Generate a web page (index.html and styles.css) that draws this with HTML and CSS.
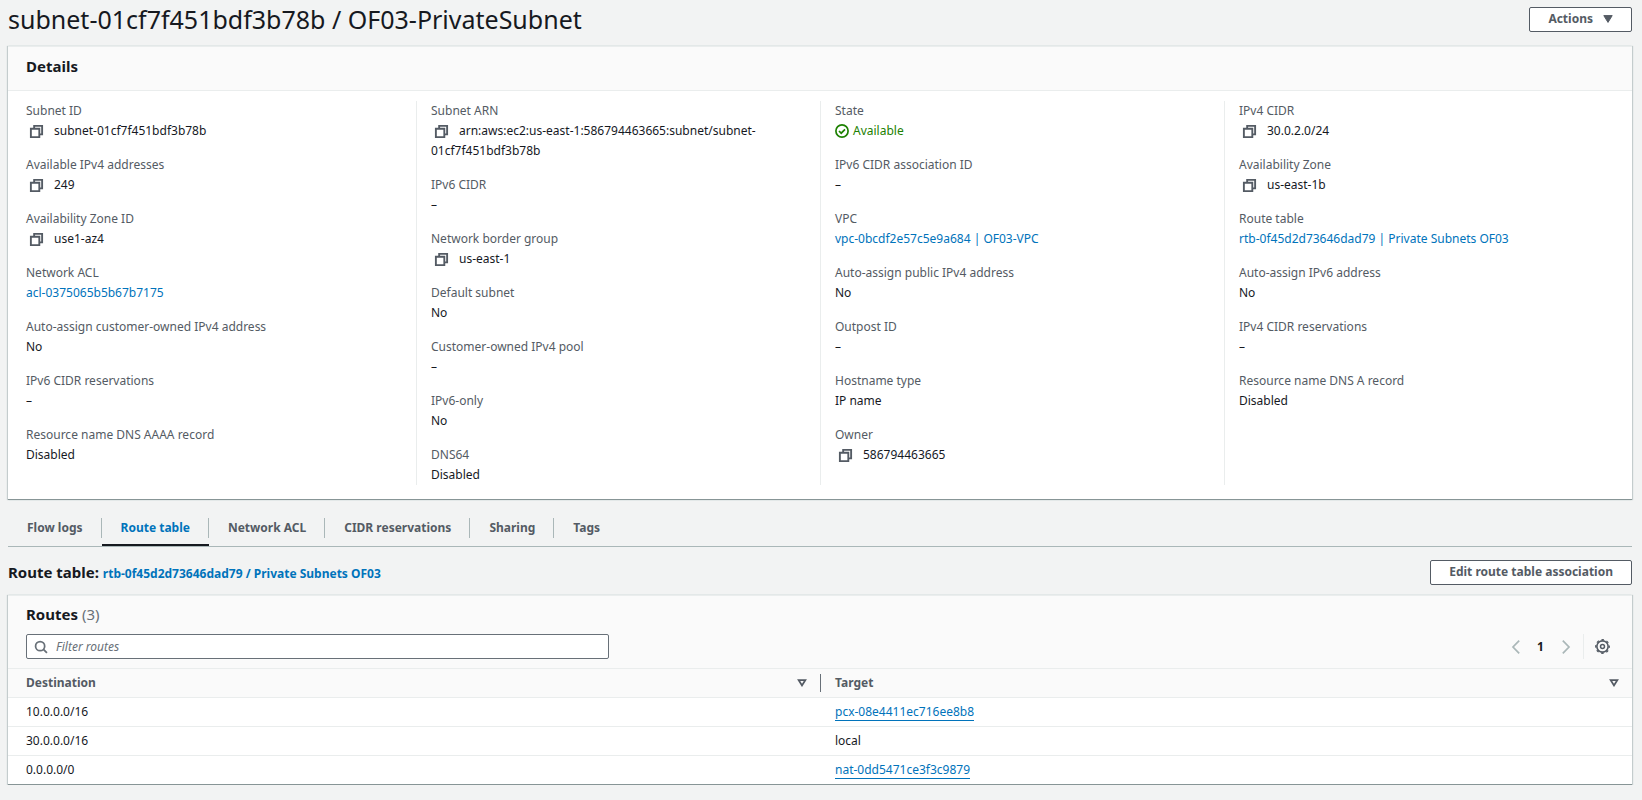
FILE: index.html
```html
<!DOCTYPE html>
<html lang="en">
<head>
<meta charset="utf-8">
<meta name="viewport" content="width=device-width, initial-scale=1">
<title>subnet-01cf7f451bdf3b78b / OF03-PrivateSubnet</title>
<link rel="stylesheet" href="styles.css">
</head>
<body>
<svg class="sprite" aria-hidden="true">
  <symbol id="copy" viewBox="0 0 16 16"><path d="M2 5h9v9H2z M5.5 5V2H14v9h-3" fill="none" stroke="currentColor" stroke-width="2"/></symbol>
  <symbol id="sort" viewBox="0 0 10 8"><path d="M1.7 1.2h6.6L5 6.4z" fill="none" stroke="currentColor" stroke-width="1.8"/></symbol>
</svg>
<main class="page">
  <header class="page-header">
    <h1 class="page-title">subnet-01cf7f451bdf3b78b / OF03-PrivateSubnet</h1>
    <button class="button" type="button">Actions
      <svg class="caret" viewBox="0 0 10 8" aria-hidden="true"><path d="M.8.6h8.4L5 7.4z" fill="currentColor" stroke="currentColor" stroke-linejoin="round"/></svg>
    </button>
  </header>

  <section class="panel">
    <div class="panel-header"><h2 class="panel-title">Details</h2></div>
    <div class="details">
      <dl class="column">
        <div class="field"><dt>Subnet ID</dt><dd><button class="copy" type="button" aria-label="Copy subnet ID"><svg><use href="#copy"/></svg></button>subnet-01cf7f451bdf3b78b</dd></div>
        <div class="field"><dt>Available IPv4 addresses</dt><dd><button class="copy" type="button" aria-label="Copy available addresses"><svg><use href="#copy"/></svg></button>249</dd></div>
        <div class="field"><dt>Availability Zone ID</dt><dd><button class="copy" type="button" aria-label="Copy zone ID"><svg><use href="#copy"/></svg></button>use1-az4</dd></div>
        <div class="field"><dt>Network ACL</dt><dd><a href="#">acl-0375065b5b67b7175</a></dd></div>
        <div class="field"><dt>Auto-assign customer-owned IPv4 address</dt><dd>No</dd></div>
        <div class="field"><dt>IPv6 CIDR reservations</dt><dd>–</dd></div>
        <div class="field"><dt>Resource name DNS AAAA record</dt><dd>Disabled</dd></div>
      </dl>
      <dl class="column">
        <div class="field"><dt>Subnet ARN</dt><dd><button class="copy" type="button" aria-label="Copy subnet ARN"><svg><use href="#copy"/></svg></button>arn:aws:ec2:us-east-1:586794463665:subnet/subnet-<wbr>01cf7f451bdf3b78b</dd></div>
        <div class="field"><dt>IPv6 CIDR</dt><dd>–</dd></div>
        <div class="field"><dt>Network border group</dt><dd><button class="copy" type="button" aria-label="Copy border group"><svg><use href="#copy"/></svg></button>us-east-1</dd></div>
        <div class="field"><dt>Default subnet</dt><dd>No</dd></div>
        <div class="field"><dt>Customer-owned IPv4 pool</dt><dd>–</dd></div>
        <div class="field"><dt>IPv6-only</dt><dd>No</dd></div>
        <div class="field"><dt>DNS64</dt><dd>Disabled</dd></div>
      </dl>
      <dl class="column">
        <div class="field"><dt>State</dt><dd class="status"><svg class="status-icon" viewBox="0 0 14 14" aria-hidden="true"><g fill="none" stroke="currentColor" stroke-width="1.7"><circle cx="7" cy="7" r="6.1"/><path d="M4 7l2.2 2.2L10 5.4"/></g></svg>Available</dd></div>
        <div class="field"><dt>IPv6 CIDR association ID</dt><dd>–</dd></div>
        <div class="field"><dt>VPC</dt><dd><a href="#">vpc-0bcdf2e57c5e9a684 | OF03-VPC</a></dd></div>
        <div class="field"><dt>Auto-assign public IPv4 address</dt><dd>No</dd></div>
        <div class="field"><dt>Outpost ID</dt><dd>–</dd></div>
        <div class="field"><dt>Hostname type</dt><dd>IP name</dd></div>
        <div class="field"><dt>Owner</dt><dd><button class="copy" type="button" aria-label="Copy owner"><svg><use href="#copy"/></svg></button>586794463665</dd></div>
      </dl>
      <dl class="column">
        <div class="field"><dt>IPv4 CIDR</dt><dd><button class="copy" type="button" aria-label="Copy IPv4 CIDR"><svg><use href="#copy"/></svg></button>30.0.2.0/24</dd></div>
        <div class="field"><dt>Availability Zone</dt><dd><button class="copy" type="button" aria-label="Copy zone"><svg><use href="#copy"/></svg></button>us-east-1b</dd></div>
        <div class="field"><dt>Route table</dt><dd><a href="#">rtb-0f45d2d73646dad79 | Private Subnets OF03</a></dd></div>
        <div class="field"><dt>Auto-assign IPv6 address</dt><dd>No</dd></div>
        <div class="field"><dt>IPv4 CIDR reservations</dt><dd>–</dd></div>
        <div class="field"><dt>Resource name DNS A record</dt><dd>Disabled</dd></div>
      </dl>
    </div>
  </section>

  <nav class="tabs" role="tablist">
    <button class="tab" type="button" role="tab" aria-selected="false">Flow logs</button>
    <button class="tab" type="button" role="tab" aria-selected="true">Route table</button>
    <button class="tab" type="button" role="tab" aria-selected="false">Network ACL</button>
    <button class="tab" type="button" role="tab" aria-selected="false">CIDR reservations</button>
    <button class="tab" type="button" role="tab" aria-selected="false">Sharing</button>
    <button class="tab" type="button" role="tab" aria-selected="false">Tags</button>
  </nav>

  <div class="association">
    <h2 class="association-title">Route table: <a href="#">rtb-0f45d2d73646dad79 / Private Subnets OF03</a></h2>
    <button class="button" type="button">Edit route table association</button>
  </div>

  <section class="panel">
    <div class="routes-header">
      <h2 class="panel-title">Routes <span class="count">(3)</span></h2>
      <div class="toolbar">
        <div class="search">
          <svg class="search-icon" viewBox="0 0 16 16" aria-hidden="true"><g fill="none" stroke="currentColor" stroke-width="2"><circle cx="7" cy="7" r="5.2"/><path d="M10.8 10.8l4 4"/></g></svg>
          <input class="search-input" type="search" placeholder="Filter routes" aria-label="Filter routes">
        </div>
        <div class="pager">
          <button class="pager-button" type="button" aria-label="Previous page"><svg viewBox="0 0 14 14"><path d="M10.2.7L4 7l6.2 6.3" fill="none" stroke="currentColor" stroke-width="1.7"/></svg></button>
          <button class="pager-button current" type="button">1</button>
          <button class="pager-button" type="button" aria-label="Next page"><svg viewBox="0 0 14 14"><path d="M3.8.7L10 7l-6.2 6.3" fill="none" stroke="currentColor" stroke-width="1.7"/></svg></button>
          <button class="settings" type="button" aria-label="Preferences"><svg viewBox="0 0 16 16"><g fill="none" stroke="currentColor"><circle cx="8" cy="8" r="6" stroke-width="1.7"/><circle cx="8" cy="8" r="7.2" stroke-width="1.4" stroke-dasharray="2.8 2.855" stroke-dashoffset="1.4"/><circle cx="8" cy="8" r="2.1" stroke-width="1.6"/></g></svg></button>
        </div>
      </div>
    </div>
    <table class="routes">
      <thead>
        <tr>
          <th scope="col"><div class="head-cell">Destination<svg class="sort"><use href="#sort"/></svg></div></th>
          <th scope="col"><div class="head-cell">Target<svg class="sort"><use href="#sort"/></svg></div></th>
        </tr>
      </thead>
      <tbody>
        <tr><td>10.0.0.0/16</td><td><a href="#">pcx-08e4411ec716ee8b8</a></td></tr>
        <tr><td>30.0.0.0/16</td><td>local</td></tr>
        <tr><td>0.0.0.0/0</td><td><a href="#">nat-0dd5471ce3f3c9879</a></td></tr>
      </tbody>
    </table>
  </section>
</main>
</body>
</html>
```
FILE: styles.css
```css
* {
  box-sizing: border-box;
}

body {
  margin: 0;
  background: #f2f3f3;
  color: #16191f;
  font-family: "Noto Sans", "Open Sans", sans-serif;
  font-size: 12px;
  line-height: 20px;
}

h1, h2, dl, dd {
  margin: 0;
}

button, input {
  font: inherit;
  color: inherit;
}

button {
  padding: 0;
  border: 0;
  background: none;
  cursor: pointer;
}

a {
  color: #0073bb;
  text-decoration: none;
}

.sprite {
  display: none;
}

.page {
  padding: 0 10px 0 8px;
}

.page-header {
  display: flex;
  align-items: center;
  justify-content: space-between;
  height: 38px;
  margin-bottom: 8px;
}

.page-title {
  font-size: 25px;
  font-weight: 400;
  line-height: 32px;
}

.button {
  display: flex;
  align-items: center;
  gap: 10px;
  padding: 2px 18px 3px;
  border: 1px solid #545b64;
  border-radius: 2px;
  background: #fff;
  color: #545b64;
  font-weight: 700;
  line-height: 18px;
}

.caret {
  width: 10px;
  height: 8px;
}

.panel {
  background: #fff;
  border-top: 1px solid #eaeded;
  border-bottom: 1px solid #879596;
  box-shadow: 1px 0 1px 0 #c4cccd, -1px 0 1px 0 #c4cccd;
}

.panel-header {
  padding: 7px 18px 12px;
  border-bottom: 1px solid #eaeded;
  background: #fafafa;
}

.panel-title {
  font-size: 15px;
  font-weight: 700;
  line-height: 24px;
}

.details {
  display: grid;
  grid-template-columns: repeat(4, 1fr);
  padding: 10px 4px 14px;
}

.column {
  display: flex;
  flex-direction: column;
  gap: 14px;
  padding: 0 14px;
}

.column + .column {
  border-left: 1px solid #eaeded;
}

.field dt {
  color: #545b64;
}

.copy {
  margin: 0 10px 0 3px;
  vertical-align: middle;
}

.copy svg {
  display: block;
  width: 15px;
  height: 15px;
  color: #545b64;
}

.status {
  display: flex;
  align-items: center;
  gap: 4px;
  color: #1d8102;
}

.status-icon {
  width: 14px;
  height: 14px;
}

.tabs {
  display: flex;
  margin-top: 18px;
  border-bottom: 1px solid #aab7b8;
}

.tab {
  display: flex;
  padding-bottom: 6px;
  border-bottom: 2px solid transparent;
  color: #545b64;
  font-weight: 700;
}

.tab::before {
  content: "";
  width: 1px;
  height: 20px;
  margin-right: 18px;
}

.tab::after {
  content: "";
  width: 1px;
  height: 20px;
  margin-left: 18px;
  background: #aab7b8;
}

.tab:last-child::after {
  background: none;
}

.tab[aria-selected="true"] {
  border-bottom-color: #16191f;
  color: #0073bb;
}

.association {
  display: flex;
  align-items: center;
  justify-content: space-between;
  margin: 13px 0 10px;
}

.association-title {
  font-size: 15px;
  font-weight: 700;
}

.association-title a {
  font-size: 12px;
}

.routes-header {
  padding: 6px 18px 9px;
  background: #fafafa;
}

.count {
  color: #687078;
  font-weight: 400;
}

.toolbar {
  display: flex;
  align-items: center;
  justify-content: space-between;
  margin-top: 8px;
}

.search {
  display: flex;
  flex: 0 1 583px;
  align-items: center;
  gap: 8px;
  height: 25px;
  padding: 0 7px;
  border: 1px solid #687078;
  border-radius: 2px;
  background: #fff;
}

.search-icon {
  width: 14px;
  height: 14px;
  color: #687078;
}

.search-input {
  flex: 1;
  min-width: 0;
  padding: 0;
  border: 0;
  outline: 0;
  background: none;
}

.search-input::placeholder {
  color: #687078;
  font-style: italic;
  opacity: 1;
}

.pager {
  display: flex;
  align-items: center;
}

.pager-button {
  width: 25px;
  color: #aab7b8;
}

.pager-button svg, .settings svg {
  display: block;
  width: 14px;
  height: 14px;
  margin: auto;
}

.settings svg {
  width: 15px;
  height: 15px;
}

.current {
  color: #16191f;
  font-weight: 700;
}

.settings {
  height: 25px;
  margin-left: 5px;
  padding: 0 4px 0 11px;
  border-left: 1px solid #eaeded;
  color: #545b64;
}

.routes {
  width: 100%;
  table-layout: fixed;
  border-spacing: 0;
}

.routes th, .routes td {
  padding: 4px 18px;
  border-top: 1px solid #eaeded;
  text-align: left;
}

.routes th {
  padding: 5px 13px 5px 0;
  background: #fafafa;
  color: #545b64;
}

.routes td:last-child {
  padding-left: 15px;
}

.head-cell {
  display: flex;
  align-items: center;
  justify-content: space-between;
  height: 18px;
  padding-left: 18px;
}

.routes th:last-child .head-cell {
  padding-left: 14px;
  border-left: 1px solid #687078;
}

.sort {
  width: 10px;
  height: 8px;
}

.routes a {
  border-bottom: 1px solid #0073bb;
}
```
